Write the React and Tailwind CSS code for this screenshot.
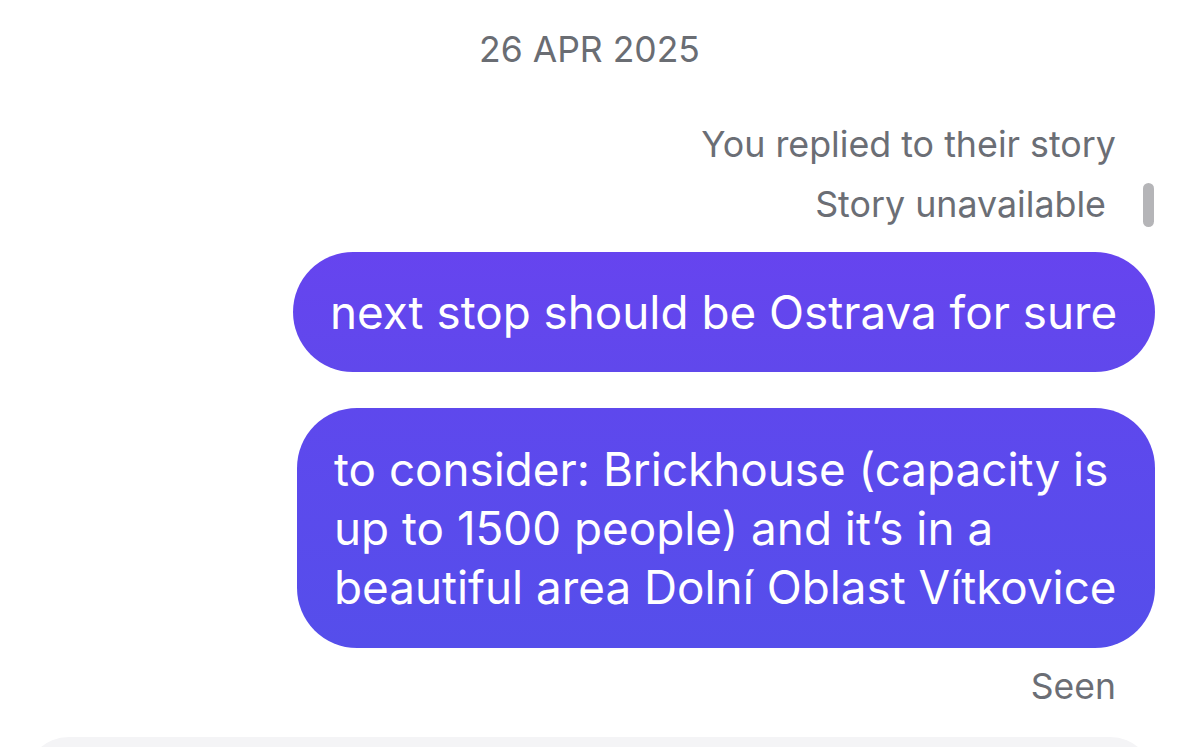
import React from "react";

const messages = [
  { id: 1, text: "next stop should be Ostrava for sure", width: "w-[862px]", height: "h-[120px]", tone: "from-[#6644ef] to-[#6048ec]" },
  {
    id: 2,
    text: "to consider: Brickhouse (capacity is up to 1500 people) and it’s in a beautiful area Dolní Oblast Vítkovice",
    width: "w-[858px]",
    height: "h-[240px]",
    tone: "from-[#5e48ed] to-[#554eeb]",
  },
];

const Bubble = ({ text, width, height, tone }) => (
  <div
    className={`${width} ${height} flex shrink-0 items-center rounded-[60px] bg-gradient-to-b ${tone} pl-[37px] pr-[20px] text-[45.8px] leading-[59px] text-white`}
  >
    <p>{text}</p>
  </div>
);

const App = () => {
  return (
    <div
      className="relative flex h-[747px] w-full flex-col overflow-hidden bg-white"
      style={{ fontFamily: "Inter, 'Noto Sans', sans-serif" }}
    >
      <div className="flex h-[100px] shrink-0 items-center justify-center text-[35.5px] text-[#6a6d73]">
        26 APR 2025
      </div>

      <div className="mt-[15px] flex shrink-0 flex-col items-end pr-[63px] text-[35.8px] text-[#6b6e75]">
        <div className="flex h-[60px] items-center">You replied to their story</div>
        <div className="mr-[10px] flex h-[59px] items-center">Story unavailable</div>
      </div>

      <div className="mt-[18px] flex shrink-0 flex-col items-end gap-[36px] pr-[24px]">
        {messages.map(message => (
          <Bubble key={message.id} {...message} />
        ))}
      </div>

      <div className="mt-[9px] flex h-[60px] shrink-0 items-center justify-end pr-[63px] text-[35.5px] text-[#6b6e75]">
        Seen
      </div>

      <div className="mx-[25px] mt-[20px] h-[60px] shrink-0 rounded-t-[44px] bg-[#f4f4f6]" />

      {/* scroll indicator */}
      <div className="absolute left-[1143px] top-[183px] h-[44px] w-[11px] rounded-full bg-[#b5b5b8]" />
    </div>
  );
};

export default App;
